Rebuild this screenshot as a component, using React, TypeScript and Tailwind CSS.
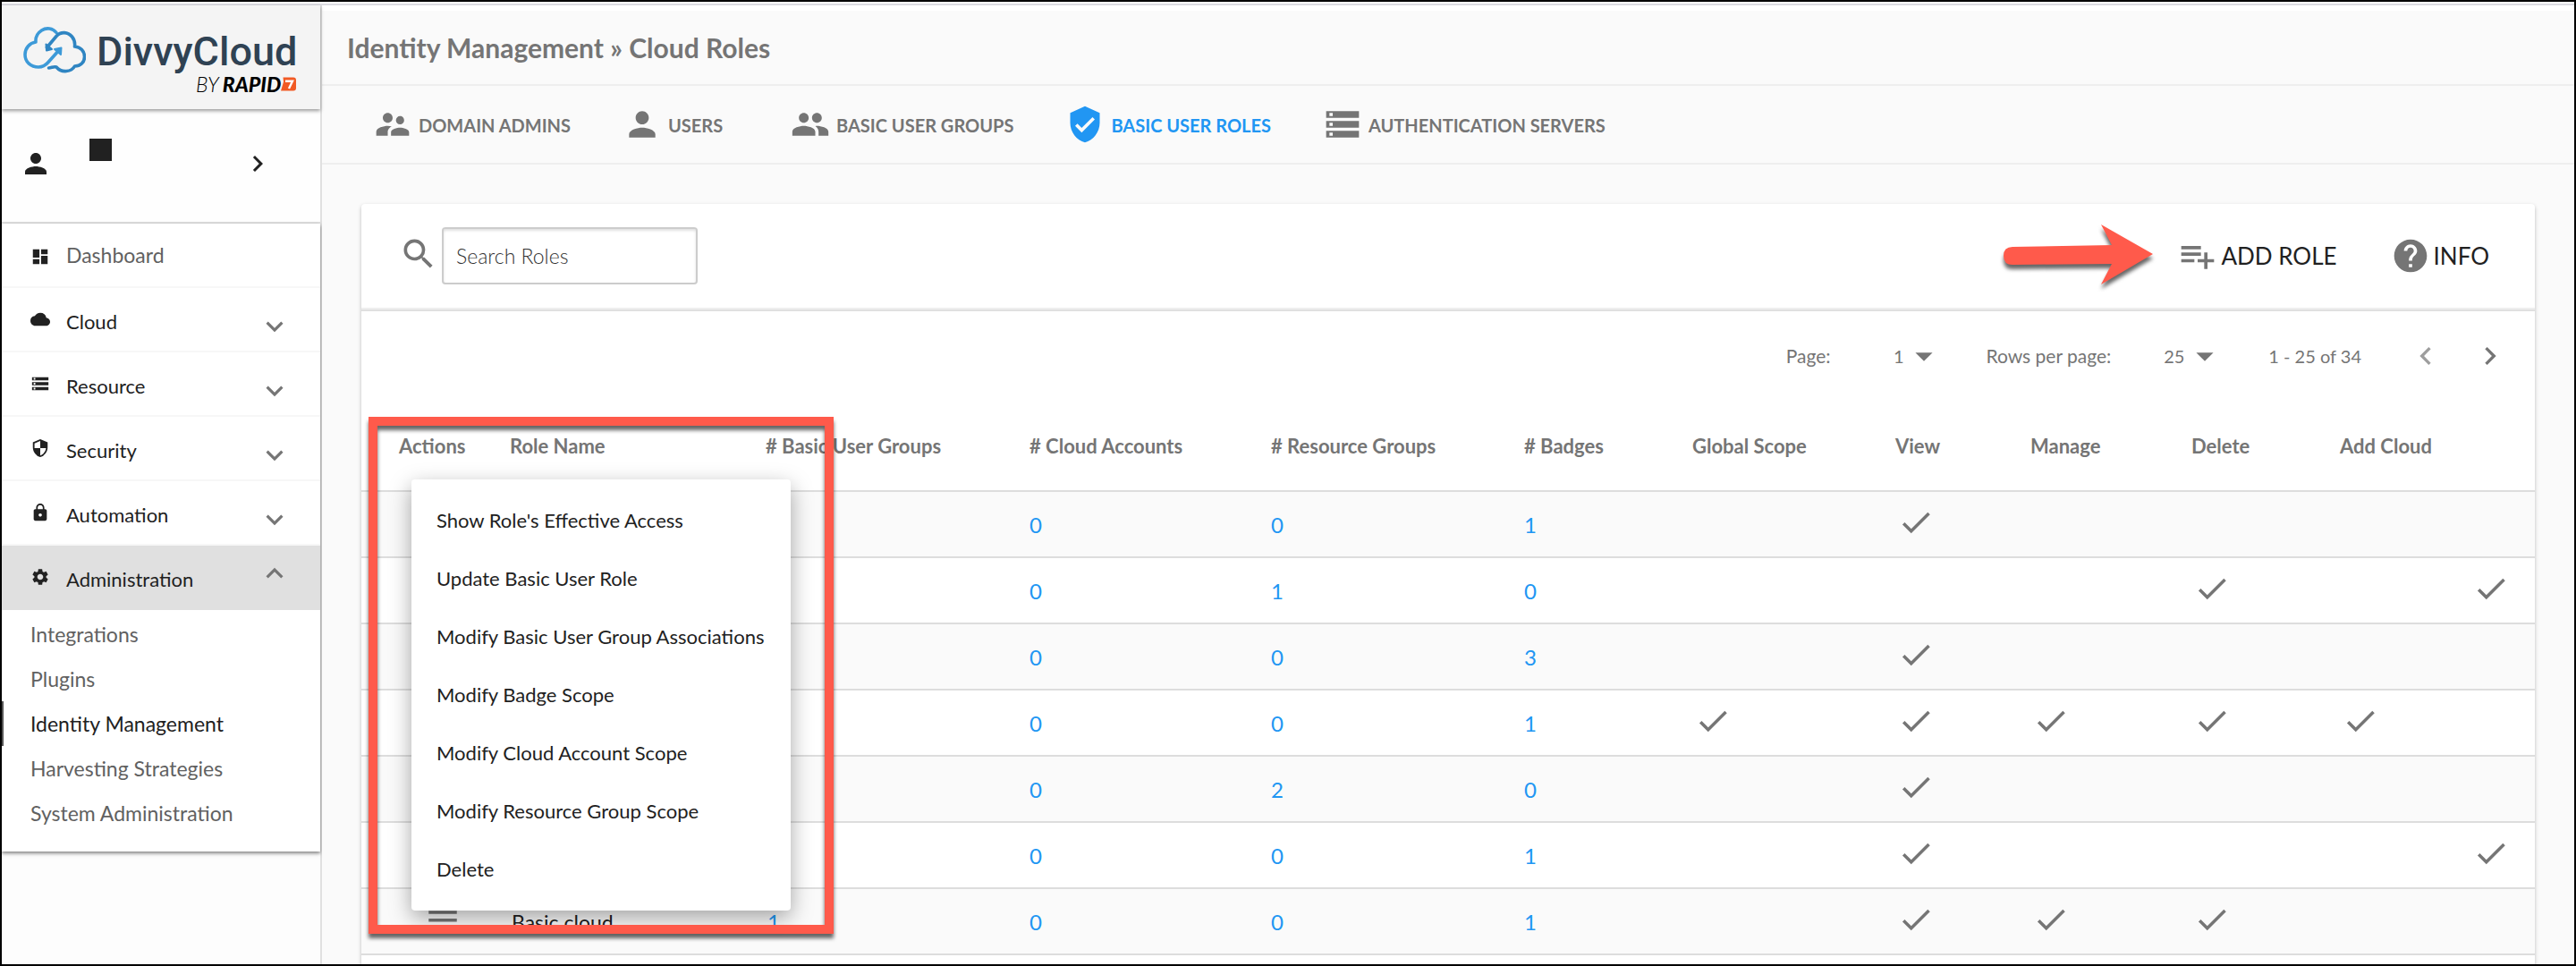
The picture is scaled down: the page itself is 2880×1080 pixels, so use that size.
import { useState } from 'react';
import type { ReactNode } from 'react';
import type { IconType } from 'react-icons';
import {
  MdArrowDropDown,
  MdCheck,
  MdChevronLeft,
  MdChevronRight,
  MdCloud,
  MdDashboard,
  MdExpandLess,
  MdExpandMore,
  MdHelp,
  MdLock,
  MdMenu,
  MdPeople,
  MdPerson,
  MdSearch,
  MdSecurity,
  MdSettings,
  MdStorage,
  MdSupervisorAccount,
  MdVerifiedUser,
} from 'react-icons/md';

type NavItem = { label: string; icon: IconType; open?: boolean; leaf?: boolean };

type Role = {
  name?: string;
  groups?: number;
  accounts: number;
  resources: number;
  badges: number;
  // global scope, view, manage, delete, add cloud, provision
  flags: boolean[];
};

const navItems: NavItem[] = [
  { label: 'Dashboard', icon: MdDashboard, leaf: true },
  { label: 'Cloud', icon: MdCloud },
  { label: 'Resource', icon: MdStorage },
  { label: 'Security', icon: MdSecurity },
  { label: 'Automation', icon: MdLock },
  { label: 'Administration', icon: MdSettings, open: true },
];

const adminLinks = [
  'Integrations',
  'Plugins',
  'Identity Management',
  'Harvesting Strategies',
  'System Administration',
];

const tabs: { label: string; icon: IconType }[] = [
  { label: 'DOMAIN ADMINS', icon: MdSupervisorAccount },
  { label: 'USERS', icon: MdPerson },
  { label: 'BASIC USER GROUPS', icon: MdPeople },
  { label: 'BASIC USER ROLES', icon: MdVerifiedUser },
  { label: 'AUTHENTICATION SERVERS', icon: MdStorage },
];

const columns = [
  { label: 'Actions', width: 'w-[166px]' },
  { label: 'Role Name', width: 'w-[286px]' },
  { label: '# Basic User Groups', width: 'w-[295px]' },
  { label: '# Cloud Accounts', width: 'w-[270px]' },
  { label: '# Resource Groups', width: 'w-[283px]' },
  { label: '# Badges', width: 'w-[188px]' },
  { label: 'Global Scope', width: 'w-[227px]' },
  { label: 'View', width: 'w-[151px]' },
  { label: 'Manage', width: 'w-[180px]' },
  { label: 'Delete', width: 'w-[166px]' },
  { label: 'Add Cloud', width: 'w-[146px]' },
  { label: '', width: 'w-[72px]' },
];

const Y = true;
const N = false;

const roles: Role[] = [
  { accounts: 0, resources: 0, badges: 1, flags: [N, Y, N, N, N, N] },
  { accounts: 0, resources: 1, badges: 0, flags: [N, N, N, Y, N, Y] },
  { accounts: 0, resources: 0, badges: 3, flags: [N, Y, N, N, N, N] },
  { accounts: 0, resources: 0, badges: 1, flags: [Y, Y, Y, Y, Y, N] },
  { accounts: 0, resources: 2, badges: 0, flags: [N, Y, N, N, N, N] },
  { accounts: 0, resources: 0, badges: 1, flags: [N, Y, N, N, N, Y] },
  { name: 'Basic cloud', groups: 1, accounts: 0, resources: 0, badges: 1, flags: [N, Y, Y, Y, N, N] },
];

const menuItems = [
  "Show Role's Effective Access",
  'Update Basic User Role',
  'Modify Basic User Group Associations',
  'Modify Badge Scope',
  'Modify Cloud Account Scope',
  'Modify Resource Group Scope',
  'Delete',
];

function Logo() {
  return (
    <div className="flex items-start pt-5 pl-6">
      <svg className="mt-1 h-[52px] w-[70px] shrink-0" viewBox="0 0 70 52" fill="none" strokeWidth="3.6" strokeLinecap="round" strokeLinejoin="round">
        <path
          stroke="#3d9ad8"
          d="M37 6.500C33 1.500 26 0.500 20.500 4C16 7 13.500 11.500 14 17C7 18 2 24 2 31C2 39.500 8.500 45 17 45C21.500 45 25 43 28 39.500L40.500 25.500"
        />
        <path stroke="#3d9ad8" strokeWidth="2" fill="#3d9ad8" d="M35 25L42.500 23.500L42 31Z" />
        <path
          stroke="#2f85c2"
          d="M26.500 23L37 10.500C42 5 50 5.500 54.500 11C57 14 58 18 57.500 22C64 22.500 68.500 27 68.500 33.500C68.500 39.500 64 44 57.500 44C54 50.500 43 52 37 45C34 44 31.500 46 28.500 46"
        />
        <path stroke="#2f85c2" strokeWidth="2" fill="#2f85c2" d="M25.500 19.500L26 26.500L32 25Z" />
      </svg>
      <div className="ml-3 flex flex-col items-end pt-1.5">
        <span className="font-['Roboto',sans-serif] text-[45px] leading-[52px] font-medium text-[#2f4253]">DivvyCloud</span>
        <span className="flex h-5 items-center text-[23px] leading-[20px] text-black italic">
          <span className="mr-1 font-light">BY</span>
          <span className="font-black">RAPID</span>
          <svg className="h-4 w-[18px]" viewBox="0 0 18 15" aria-label="7">
            <path fill="#f15a24" d="M2.500 0H14Q17 0 17 3V12Q17 15 14 15H0L3 5Z" />
            <path fill="none" stroke="#fff" strokeWidth="2.400" d="M5 4.200H13L9 12.500" />
          </svg>
        </span>
      </div>
    </div>
  );
}

function Sidebar() {
  return (
    <aside className="flex w-[358px] shrink-0 flex-col border-r-2 border-[#e0e0e0] bg-[#fdfdfd]">
      <div className="relative h-[116px] bg-[#f4f4f4] shadow-[0_2px_4px_rgba(0,0,0,0.4)]">
        <Logo />
      </div>

      {/* Current user */}
      <button className="flex h-[128px] items-center border-b-2 border-[#e0e0e0] bg-[#fefefe] pb-1 pl-5 text-[#212121]" aria-label="Account">
        <MdPerson size={36} />
        <span className="mb-8 ml-[42px] size-[25px] bg-[#212121]" />
        <MdChevronRight size={36} className="ml-[145px]" />
      </button>

      <nav className="bg-white pb-[18px] shadow-[0_2px_4px_rgba(0,0,0,0.5)]">
        {navItems.map(({ label, icon: Icon, open, leaf }) => (
          <button
            key={label}
            className={`flex h-[72px] w-full items-center border-b-2 pr-8 pl-8 ${
              open ? 'border-[#e0e0e0] bg-[#e0e0e0]' : 'border-[#f7f7f7]'
            }`}
          >
            <Icon size={22} className={`text-[#212121] ${leaf ? 'mt-1' : ''}`} />
            <span className={`ml-[18px] ${leaf ? 'text-[23px] text-[#616161]' : 'pt-1 text-[22px] text-[#212121]'}`}>{label}</span>
            {!leaf && (open ? (
              <MdExpandLess size={38} className="mb-2 ml-auto text-[#757575]" />
            ) : (
              <MdExpandMore size={38} className="mt-4 ml-auto text-[#757575]" />
            ))}
          </button>
        ))}
        <ul className="pt-0.5">
          {adminLinks.map((label) => {
            const active = label === 'Identity Management';
            return (
              <li key={label}>
                <a
                  href="#"
                  className={`flex h-[50px] items-center border-l-2 pl-[30px] text-[23px] ${
                    active ? 'border-[#555] text-[#212121]' : 'border-transparent text-[#616161]'
                  }`}
                >
                  {label}
                </a>
              </li>
            );
          })}
        </ul>
      </nav>
    </aside>
  );
}

function Tabs() {
  const [active, setActive] = useState('BASIC USER ROLES');
  return (
    <nav className="flex h-[88px] items-center gap-[58px] border-b-2 border-[#eee] pl-[57px]">
      {tabs.map(({ label, icon: Icon }) => (
        <button
          key={label}
          onClick={() => setActive(label)}
          className={`flex min-w-[130px] items-center gap-[7px] text-[20px] font-bold ${
            active === label ? 'text-[#2196f3]' : 'text-[#757575]'
          }`}
        >
          <Icon size={44} />
          <span className="pt-0.5">{label}</span>
        </button>
      ))}
    </nav>
  );
}

function ArrowCallout() {
  return (
    <svg className="absolute top-[14px] right-[424px] h-[84px] w-[176px] drop-shadow-[0_5px_2px_rgba(0,0,0,0.6)]" viewBox="0 0 176 84">
      <path fill="#ff5a4b" d="M16 34L127 32L115 9L173 42L115 76L127 53L16 54Q6 54 6 44Q6 34 16 34Z" />
    </svg>
  );
}

function Toolbar() {
  return (
    <div className="relative flex h-[120px] items-center border-b-2 border-[#e0e0e0] pr-[51px] pb-0.5 pl-[42px] shadow-[inset_0_-2px_#eee]">
      <label htmlFor="search" className="pb-1 text-[#757575]" aria-label="Search">
        <MdSearch size={44} />
      </label>
      <input
        id="search"
        placeholder="Search Roles"
        className="ml-1 h-16 w-[286px] rounded border-2 border-[#ccc] px-3.5 text-[23px] font-light shadow-[inset_0_2px_3px_rgba(0,0,0,0.12)] placeholder:text-[#333]"
      />
      <button className="ml-auto flex items-center gap-1 text-[26px] text-[#212121]">
        <svg className="size-11 text-[#757575]" viewBox="0 0 24 24" fill="currentColor">
          <path d="M14 10H2v2h12v-2zm0-4H2v2h12V6zm4 8v-4h-2v4h-4v2h4v4h2v-4h4v-2h-4zM2 16h8v-2H2v2z" />
        </svg>
        ADD ROLE
      </button>
      <button className="ml-[60px] flex items-center gap-1 text-[26px] text-[#212121]">
        <MdHelp size={44} className="text-[#757575]" />
        INFO
      </button>
      <ArrowCallout />
    </div>
  );
}

function PageSelect({ id, label, value }: { id: string; label: string; value: string }) {
  return (
    <div className="flex items-center">
      <label htmlFor={id} className="text-[21px]">
        {label}
      </label>
      <select id={id} defaultValue={value} className="ml-14 w-[26px] appearance-none bg-transparent text-right">
        <option>{value}</option>
      </select>
      <MdArrowDropDown size={46} />
    </div>
  );
}

function Pagination() {
  return (
    <div className="flex h-[100px] items-center justify-end pr-[30px] text-[20px] text-[#757575]">
      <PageSelect id="page" label="Page:" value="1" />
      <div className="ml-[46px]">
        <PageSelect id="rows" label="Rows per page:" value="25" />
      </div>
      <span className="ml-12">1 - 25 of 34</span>
      <button aria-label="Previous page" className="ml-[52px] text-[#9e9e9e]">
        <MdChevronLeft size={40} />
      </button>
      <button aria-label="Next page" className="ml-8">
        <MdChevronRight size={40} />
      </button>
    </div>
  );
}

function CountLink({ children }: { children: ReactNode }) {
  return (
    <a href="#" className="text-[24px] text-[#2196f3]">
      {children}
    </a>
  );
}

function RolesTable() {
  return (
    <table className="w-full table-fixed border-collapse text-left">
      <thead>
        <tr className="h-[101px] border-b-2 border-[#ddd] text-[22px] text-[#757575]">
          {columns.map((col, i) => (
            <th key={i} className={`${col.width} p-0 font-bold whitespace-nowrap first:pl-[42px]`}>
              {col.label}
            </th>
          ))}
        </tr>
      </thead>
      <tbody>
        {roles.map((role, i) => (
          <tr key={i} className="h-[74px] border-b-2 border-[#ddd] odd:bg-[#fafafa]">
            <td className="p-0 pb-5 pl-[70px]">
              <button className="block text-[#757575]" aria-label="Role actions">
                <MdMenu size={42} />
              </button>
            </td>
            <td className="p-0 pt-0.5 pl-0.5 text-[23px] text-[#212121]">{role.name}</td>
            <td className="p-0 pt-0.5 pl-0.5">{role.groups !== undefined && <CountLink>{role.groups}</CountLink>}</td>
            <td className="p-0 pt-0.5">
              <CountLink>{role.accounts}</CountLink>
            </td>
            <td className="p-0 pt-0.5">
              <CountLink>{role.resources}</CountLink>
            </td>
            <td className="p-0 pt-0.5">
              <CountLink>{role.badges}</CountLink>
            </td>
            {role.flags.map((on, j) => (
              <td key={j} className="p-0 pb-1 pl-0.5">
                {on && <MdCheck size={42} className="text-[#757575]" />}
              </td>
            ))}
          </tr>
        ))}
      </tbody>
    </table>
  );
}

function ActionsMenu() {
  return (
    <ul className="absolute top-[88px] left-14 w-[424px] rounded bg-white pt-[13px] pb-3.5 shadow-[0_8px_24px_rgba(0,0,0,0.35)]">
      {menuItems.map((item) => (
        <li key={item}>
          <button className="flex h-[65px] w-full items-center px-7 text-[22px] whitespace-nowrap text-[#212121]">{item}</button>
        </li>
      ))}
    </ul>
  );
}

export default function App() {
  return (
    <div className="h-screen overflow-hidden border-2 border-black bg-white pt-0.5 font-['Lato',sans-serif]">
      <div className="flex h-full border-t-2 border-[#dcdce2]">
        <Sidebar />
        <main className="min-w-0 flex-1 border-t-6 border-white bg-[#fafafa]">
          <header className="flex h-[84px] items-center border-b-2 border-[#eee] pl-7">
            <h1 className="text-[30px] font-bold text-[#757575]">Identity Management » Cloud Roles</h1>
          </header>
          <Tabs />
          <section className="mt-11 mr-11 ml-11 rounded bg-white shadow-[0_2px_4px_rgba(0,0,0,0.25)]">
            <Toolbar />
            <Pagination />
            <div className="relative">
              <RolesTable />
              <div className="h-20" />
              <ActionsMenu />
              {/* Callout frame around the open menu */}
              <div className="pointer-events-none absolute top-[18px] left-2 h-[578px] w-[520px] border-10 border-[#ff5a4b] drop-shadow-[0_5px_2px_rgba(0,0,0,0.6)]" />
            </div>
          </section>
        </main>
      </div>
    </div>
  );
}
